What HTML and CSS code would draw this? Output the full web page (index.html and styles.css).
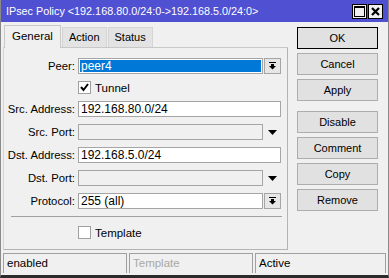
FILE: index.html
```html
<!DOCTYPE html>
<html lang="en">
<head>
  <meta charset="UTF-8" />
  <title>IPsec Policy</title>
  <link rel="stylesheet" href="styles.css">
</head>
<body>
  <div class="window">
    <div class="titlebar">
      <span class="title">IPsec Policy &lt;192.168.80.0/24:0-&gt;192.168.5.0/24:0&gt;</span>
      <div class="tbtns">
        <div class="tbtn">
          <svg width="11" height="11" viewBox="0 0 11 11"><rect x="0.5" y="0.5" width="10" height="10" fill="none" stroke="#000"/><rect x="0" y="0" width="11" height="2" fill="#000"/></svg>
        </div>
        <div class="tbtn">
          <svg width="9" height="9" viewBox="0 0 9 9"><path d="M1 1 L8 8 M8 1 L1 8" stroke="#000" stroke-width="2.2"/></svg>
        </div>
      </div>
    </div>

    <div class="main">
      <div class="left">
        <div class="tabs">
          <div class="tab active">General</div>
          <div class="tab">Action</div>
          <div class="tab">Status</div>
        </div>
        <div class="panel">
          <div class="row">
            <label>Peer:</label>
            <div class="field selected">peer4</div>
            <div class="dbtn">
              <svg width="7" height="8" viewBox="0 0 7 8"><rect x="0" y="0" width="7" height="1" fill="#000"/><rect x="2" y="2" width="3" height="2" fill="#000"/><polygon points="0,4 7,4 3.5,7.5" fill="#000"/></svg>
            </div>
          </div>
          <div class="row check-row">
            <label></label>
            <div class="check checked">
              <svg width="9" height="9" viewBox="0 0 9 9"><path d="M1 4 L3.5 7 L8 1" fill="none" stroke="#000" stroke-width="2"/></svg>
            </div>
            <span class="check-text">Tunnel</span>
          </div>
          <div class="row">
            <label>Src. Address:</label>
            <div class="field wide">192.168.80.0/24</div>
          </div>
          <div class="row">
            <label>Src. Port:</label>
            <div class="field disabled"></div>
            <div class="arrow">
              <svg width="9" height="5" viewBox="0 0 9 5"><polygon points="0,0 9,0 4.5,5" fill="#000"/></svg>
            </div>
          </div>
          <div class="row">
            <label>Dst. Address:</label>
            <div class="field wide">192.168.5.0/24</div>
          </div>
          <div class="row">
            <label>Dst. Port:</label>
            <div class="field disabled"></div>
            <div class="arrow">
              <svg width="9" height="5" viewBox="0 0 9 5"><polygon points="0,0 9,0 4.5,5" fill="#000"/></svg>
            </div>
          </div>
          <div class="row">
            <label>Protocol:</label>
            <div class="field">255 (all)</div>
            <div class="dbtn">
              <svg width="7" height="8" viewBox="0 0 7 8"><rect x="0" y="0" width="7" height="1" fill="#000"/><rect x="2" y="2" width="3" height="2" fill="#000"/><polygon points="0,4 7,4 3.5,7.5" fill="#000"/></svg>
            </div>
          </div>
          <div class="sep"></div>
          <div class="row check-row template">
            <label></label>
            <div class="check"></div>
            <span class="check-text">Template</span>
          </div>
        </div>
      </div>

      <div class="buttons">
        <button class="btn default">OK</button>
        <button class="btn">Cancel</button>
        <button class="btn">Apply</button>
        <button class="btn spaced">Disable</button>
        <button class="btn">Comment</button>
        <button class="btn">Copy</button>
        <button class="btn">Remove</button>
      </div>
    </div>

    <div class="statusbar">
      <div class="seg s1">enabled</div>
      <div class="seg s2 dim">Template</div>
      <div class="seg s3">Active</div>
    </div>
  </div>
</body>
</html>
```

FILE: styles.css
```css
body { margin: 0; font-family: "Liberation Sans", Arial, sans-serif; font-size: 11px; color: #000; background: #f0f0f0; }
.window { width: 389px; height: 278px; box-sizing: border-box; background: #f0f0f0; border-left: 1px solid #8a8a8a; border-right: 1px solid #8a8a8a; border-bottom: 3px solid #2b2b2b; display: flex; flex-direction: column; overflow: hidden; }

.titlebar { height: 22px; background: #5050d2; display: flex; align-items: center; justify-content: space-between; padding: 0 5px 0 5px; }
.title { color: #fff; font-size: 10.8px; }
.tbtns { display: flex; gap: 1px; }
.tbtn { width: 13px; height: 13px; border: 1px solid #000; background: #f0f0f0; display: flex; align-items: center; justify-content: center; }

.main { display: flex; height: 230px; }
.left { width: 285px; padding: 2px 0 0 2px; }
.tabs { display: flex; align-items: flex-end; height: 23px; padding-left: 1px; }
.tab { height: 19px; line-height: 19px; padding: 0 6px; background: #e3e3e3; border: 1px solid #d4d4d4; border-bottom: none; margin-right: 1px; font-size: 11px; }
.tab.active { height: 22px; line-height: 21px; padding: 0 7px; background: #f0f0f0; border-color: #c8c8c8; position: relative; top: 1px; font-size: 11.5px; }

.panel { height: 203px; border: 1px solid #b4b4b4; border-top-color: #c8c8c8; border-left-color: #d4d4d4; box-sizing: border-box; padding-top: 10px; }
.row { display: flex; align-items: center; height: 16px; margin-bottom: 7px; }
.row label { width: 71px; text-align: right; margin-right: 3px; white-space: nowrap; font-size: 11.3px; }
.field { width: 181px; height: 14px; border: 1px solid #a5a5a5; background: #fff; line-height: 14px; padding-left: 2px; box-sizing: content-box; white-space: nowrap; font-size: 12px; }
.field.wide { width: 199px; }
.field.selected { background: #0078d7; color: #fff; box-shadow: inset 0 0 0 1px #fff; }
.field.disabled { background: #f0f0f0; }
.dbtn { width: 15px; height: 14px; margin-left: 1px; border: 1px solid #a5a5a5; background: #e6e6e6; display: flex; align-items: center; justify-content: center; }
.arrow { width: 17px; margin-left: 1px; display: flex; justify-content: center; align-items: center; }

.check-row { height: 13px; margin-top: 3px; margin-bottom: 7px; }
.check { width: 11px; height: 11px; border: 1px solid #a0a0a0; background: #fff; display: flex; align-items: center; justify-content: center; }
.check-text { margin-left: 4px; font-size: 11.5px; }
.sep { height: 1px; background: #a0a0a0; margin: 1px 5px 9px 7px; }

.buttons { display: flex; flex-direction: column; gap: 4px; padding: 5px 0 0 9px; }
.btn { width: 81px; height: 22px; font-family: inherit; font-size: 11px; background: #e1e1e1; border: 1px solid #adadad; padding: 0; color: #000; }
.btn.default { border: 1px solid #000; box-shadow: inset 0 0 0 1px #e1e1e1; }
.btn.spaced { margin-top: 6px; }

.statusbar { display: flex; height: 20px; margin-top: 1px; padding-left: 2px; font-size: 11.5px; }
.seg { border: 1px solid #a0a0a0; border-bottom: none; line-height: 19px; padding-left: 3px; }
.s1 { width: 119px; margin-right: 2px; }
.s2 { width: 119px; margin-right: 2px; }
.s3 { flex: 1; margin-right: 2px; }
.dim { color: #a8a8a8; }
```
